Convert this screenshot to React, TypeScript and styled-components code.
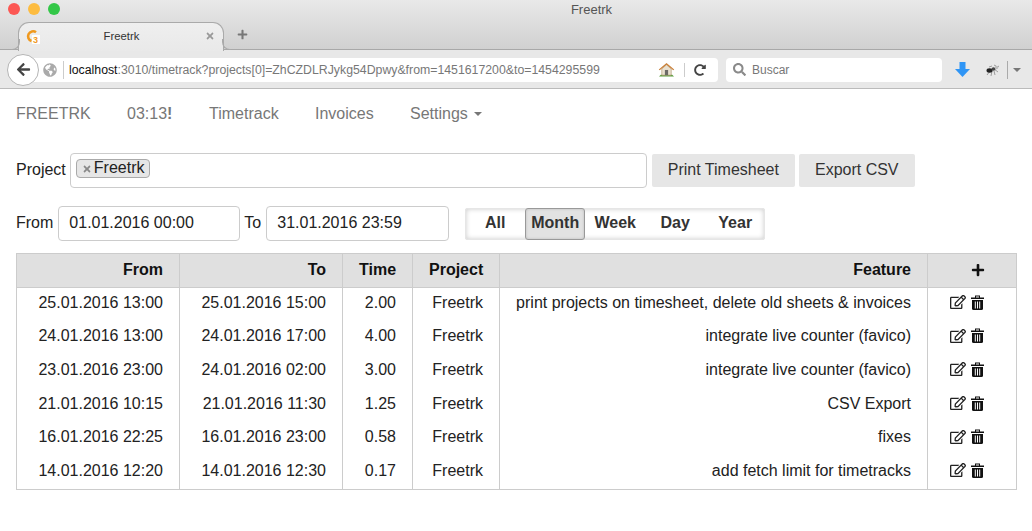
import React from "react";
import styled, { createGlobalStyle } from "styled-components";
import { FaPlus, FaRegEdit, FaTimes, FaArrowLeft, FaRedoAlt, FaSearch, FaGlobeAmericas } from "react-icons/fa";

const Global = createGlobalStyle`
    html, body {
        margin: 0;
        padding: 0;
        background: #fff;
        font-family: "Liberation Sans", Arial, sans-serif;
        font-size: 16px;
        color: #222;
        overflow: hidden;
    }
    * {
        box-sizing: border-box;
    }
`;

const Page = styled.div`
    width: 1032px;
    height: 531px;
    overflow: hidden;
`;

/* browser chrome */

const TitleBar = styled.div`
    height: 50px;
    background: linear-gradient(#e9e9e9, #d0d0d0);
    border-bottom: 1px solid #a8a8a8;
    display: grid;
    grid-template-rows: 21px 29px;
    position: relative;
`;

const TitleRow = styled.div`
    position: relative;
    display: flex;
    align-items: center;
    justify-content: center;
    padding: 0 0 3px 151px;
    font-size: 13px;
    color: #555;
`;

const Lights = styled.div`
    position: absolute;
    left: 8px;
    top: 3px;
    display: flex;
    gap: 8px;
`;

const Light = styled.span<{ $color: string }>`
    width: 12px;
    height: 12px;
    border-radius: 50%;
    background: ${(p) => p.$color};
`;

const TabRow = styled.div`
    display: flex;
    align-items: flex-end;
    padding-left: 18px;
    gap: 13px;
`;

const Tab = styled.div`
    position: relative;
    width: 206px;
    height: 29px;
    margin-bottom: -1px;
    background: linear-gradient(#efefef, #e9e9e9);
    border: 1px solid #aaa;
    border-bottom: none;
    border-radius: 11px 11px 0 0;
    display: flex;
    align-items: center;
    padding: 0 8px 2px 6px;
    font-size: 11.3px;
    color: #333;

    &::before,
    &::after {
        content: "";
        position: absolute;
        bottom: 1px;
        width: 8px;
        height: 10px;
        border-bottom: 1px solid #aaa;
    }
    &::before {
        left: -8px;
        border-right: 1px solid #aaa;
        border-radius: 0 0 8px 0;
    }
    &::after {
        right: -8px;
        border-left: 1px solid #aaa;
        border-radius: 0 0 0 8px;
    }
`;

const TabTitle = styled.span`
    flex: 1;
    text-align: center;
    padding-right: 2px;
`;

const NewTab = styled.span`
    height: 29px;
    display: flex;
    align-items: center;
    padding-bottom: 2px;
    color: #777;
    font-size: 11px;
`;

const Toolbar = styled.div`
    height: 39px;
    background: #e8e8e8;
    border-bottom: 1px solid #bbb;
    display: flex;
    align-items: center;
    padding: 1px 0 0 7px;
`;

const BackButton = styled.div`
    width: 32px;
    height: 32px;
    border-radius: 50%;
    background: #fff;
    border: 1px solid #b5b5b5;
    display: flex;
    align-items: center;
    justify-content: center;
    color: #444;
    font-size: 15px;
    position: relative;
    z-index: 1;
`;

const UrlBar = styled.div`
    width: 685px;
    height: 24px;
    margin-left: -6px;
    background: #fff;
    border-radius: 0 4px 4px 0;
    display: flex;
    align-items: center;
    padding-left: 10px;
    font-size: 12.3px;
    color: #777;
`;

const Globe = styled.span`
    color: #aaa;
    font-size: 14px;
    display: flex;
    margin-right: 6px;
`;

const UrlText = styled.span`
    flex: 1;
    border-left: 1px solid #ccc;
    padding-left: 5px;
    line-height: 18px;
    white-space: nowrap;
    b {
        font-weight: normal;
        color: #111;
    }
`;

const UrlIcons = styled.span`
    display: flex;
    align-items: center;
    gap: 9px;
    padding-right: 12px;
    color: #444;
    font-size: 12px;
`;

const UrlDivider = styled.i`
    width: 1px;
    height: 14px;
    background: #ccc;
`;

const SearchBar = styled.div`
    width: 216px;
    height: 24px;
    margin-left: 8px;
    background: #fff;
    border-radius: 4px;
    display: flex;
    align-items: center;
    gap: 6px;
    padding-left: 7px;
    color: #777;
    font-size: 12px;
    svg {
        color: #8a8a8a;
        font-size: 13px;
    }
`;

const ToolIcons = styled.div`
    display: flex;
    align-items: center;
    margin-left: 13px;
`;

const ToolGap = styled.span`
    width: 15px;
`;

const ToolDivider = styled.i`
    width: 1px;
    height: 18px;
    background: #aaa;
    margin: 0 5px 0 6px;
`;

const Caret = styled.i<{ $color?: string; $size?: number }>`
    display: inline-block;
    border-left: ${(p) => p.$size ?? 4}px solid transparent;
    border-right: ${(p) => p.$size ?? 4}px solid transparent;
    border-top: ${(p) => p.$size ?? 4}px solid ${(p) => p.$color ?? "#777"};
`;

/* app nav */

const Nav = styled.nav`
    height: 50px;
    display: flex;
    align-items: center;
    padding: 0 0 0 16px;
    color: #777;
    font-size: 16px;
`;

const NavItem = styled.span<{ $w: number }>`
    width: ${(p) => p.$w}px;
    display: inline-flex;
    align-items: center;
    gap: 6px;
    white-space: nowrap;
`;

/* filters */

const Content = styled.div`
    padding: 14px 16px 0;
`;

const FilterRow = styled.div`
    display: flex;
    align-items: center;
    height: 35px;
    margin-bottom: 18px;
`;

const Label = styled.label<{ $gap?: number }>`
    margin-right: ${(p) => p.$gap ?? 4}px;
    padding-bottom: 2px;
    color: #222;
`;

const TagInput = styled.div`
    width: 577px;
    height: 35px;
    border: 1px solid #ccc;
    border-radius: 4px;
    padding: 5px 5px;
    margin-right: 5px;
`;

const Tag = styled.span`
    display: inline-flex;
    align-items: center;
    height: 19px;
    padding: 0 5px 2px 5px;
    background: #e6e6e6;
    border: 1px solid #aaa;
    border-radius: 4px;
    gap: 2px;
    svg {
        color: #888;
        font-size: 10px;
        margin-top: 2px;
    }
`;

const Button = styled.button`
    height: 33px;
    padding: 0 16px 2px;
    margin-right: 4px;
    font: inherit;
    color: #333;
    background: #e6e6e6;
    border: none;
    border-radius: 2px;
`;

const DateInput = styled.div<{ $w: number }>`
    width: ${(p) => p.$w}px;
    height: 35px;
    margin-right: 4px;
    border: 1px solid #ccc;
    border-radius: 4px;
    padding: 0 10px 2px;
    display: flex;
    align-items: center;
`;

const RangeGroup = styled.div`
    width: 300px;
    height: 32px;
    margin: 1px 0 0 12px;
    border-radius: 3px;
    background: #fff;
    box-shadow: inset 0 0 0 1px #e6e6e6, inset 0 0 5px 1px #ccc;
    display: flex;
    align-items: center;
`;

const RangeItem = styled.span<{ $active?: boolean }>`
    width: 60px;
    height: 32px;
    padding-bottom: 2px;
    font-weight: bold;
    color: #333;
    display: flex;
    align-items: center;
    justify-content: center;
    border-radius: 3px;
    ${(p) =>
        p.$active &&
        `
        background: #e2e2e2;
        border: 1px solid #999;
        box-shadow: inset 0 0 3px #bbb;
    `}
`;

/* table */

const Table = styled.table`
    width: 1000px;
    border-collapse: collapse;
    table-layout: fixed;
    margin-top: -6px;
`;

const Col = styled.col<{ $w: number }>`
    width: ${(p) => p.$w}px;
`;

const Th = styled.th`
    height: 34px;
    padding: 0 16px 2px;
    text-align: right;
    background: #e0e0e0;
    border: 1px solid #ccc;
    color: #111;
`;

const Td = styled.td`
    height: 33.67px;
    padding: 0 16px 3px;
    text-align: right;
    border-left: 1px solid #ccc;
    border-right: 1px solid #ccc;
    white-space: nowrap;
    color: #222;
    tr:last-child & {
        border-bottom: 1px solid #ccc;
    }
`;

const ActionTh = styled(Th)`
    padding-right: 31px;
`;

const ActionTd = styled(Td)`
    padding-right: 32px;
`;

const IconCell = styled.span`
    display: inline-flex;
    gap: 5px;
    align-items: center;
    color: #222;
    font-size: 16px;
    vertical-align: middle;
    margin-top: -3px;
`;

const PlusIcon = styled(FaPlus)`
    font-size: 14px;
    color: #111;
    vertical-align: middle;
`;

function Favicon() {
    return (
        <svg width="15" height="15" viewBox="0 0 15 15" style={{ flex: "none" }}>
            <path d="M11 3.2A5 5 0 1 0 6.5 12" fill="none" stroke="#f0991f" strokeWidth="2.6" />
            <rect x="7" y="6" width="8" height="9" fill="#fff" />
            <text x="8" y="14" fontSize="9" fontWeight="bold" fontFamily="Liberation Sans" fill="#f0991f">
                3
            </text>
        </svg>
    );
}

function HomeIcon() {
    return (
        <svg width="17" height="15" viewBox="0 0 18 15">
            <path d="M1 15l2-2h12l2 2z" fill="#5a9e3c" />
            <path d="M4 7v6.5h10V7L9 2.5z" fill="#e9e0cf" stroke="#a98a5f" strokeWidth=".6" />
            <path d="M.8 7.6L9 .6l8.2 7-1 .8L9 2.6 1.8 8.4z" fill="#c9803a" />
            <rect x="7.3" y="8" width="3.4" height="5.5" fill="#6d6a66" />
        </svg>
    );
}

function DownloadIcon() {
    return (
        <svg width="15" height="15" viewBox="0 0 15 15">
            <path d="M4.5 0h6v7h4.5l-7.5 8L0 7h4.5z" fill="#2f95f5" />
        </svg>
    );
}

function AntIcon() {
    return (
        <svg width="16" height="14" viewBox="0 0 16 14">
            <g stroke="#888" strokeWidth=".8" fill="none">
                <path d="M2 12L5 8M6 13l1-5M10 12L9 8M13 9L9 6M7 3l-3 1M9 2l2 1M14 3l-3 2" />
            </g>
            <ellipse cx="4.5" cy="7.5" rx="3" ry="2.2" fill="#222" />
            <ellipse cx="8.5" cy="6" rx="2" ry="1.7" fill="#444" />
            <circle cx="11.5" cy="4.5" r="1.8" fill="#bbb" />
        </svg>
    );
}

function TrashIcon() {
    return (
        <svg width="13" height="15" viewBox="0 0 13 15">
            <path d="M0 2.5h13V4H0zM4 2.5V.5h5v2H8V1.5H5v1z" fill="#111" />
            <path d="M1 5h11v8.5a1.5 1.5 0 0 1-1.5 1.5h-8A1.5 1.5 0 0 1 1 13.5z" fill="#111" />
            <path d="M3.8 6.5h1v7h-1zM6 6.5h1v7H6zM8.2 6.5h1v7h-1z" fill="#fff" />
        </svg>
    );
}

const rows = [
    ["25.01.2016 13:00", "25.01.2016 15:00", "2.00", "print projects on timesheet, delete old sheets & invoices"],
    ["24.01.2016 13:00", "24.01.2016 17:00", "4.00", "integrate live counter (favico)"],
    ["23.01.2016 23:00", "24.01.2016 02:00", "3.00", "integrate live counter (favico)"],
    ["21.01.2016 10:15", "21.01.2016 11:30", "1.25", "CSV Export"],
    ["16.01.2016 22:25", "16.01.2016 23:00", "0.58", "fixes"],
    ["14.01.2016 12:20", "14.01.2016 12:30", "0.17", "add fetch limit for timetracks"]
];

export default function App() {
    return (
        <Page>
            <Global />
            <TitleBar>
                <TitleRow>
                    <Lights>
                        <Light $color="#fc5753" />
                        <Light $color="#fdbc40" />
                        <Light $color="#33c748" />
                    </Lights>
                    Freetrk
                </TitleRow>
                <TabRow>
                    <Tab>
                        <Favicon />
                        <TabTitle>Freetrk</TabTitle>
                        <FaTimes color="#999" size={10} />
                    </Tab>
                    <NewTab>
                        <FaPlus />
                    </NewTab>
                </TabRow>
            </TitleBar>
            <Toolbar>
                <BackButton>
                    <FaArrowLeft />
                </BackButton>
                <UrlBar>
                    <Globe>
                        <FaGlobeAmericas />
                    </Globe>
                    <UrlText>
                        <b>localhost</b>:3010/timetrack?projects[0]=ZhCZDLRJykg54Dpwy&amp;from=1451617200&amp;to=1454295599
                    </UrlText>
                    <UrlIcons>
                        <HomeIcon />
                        <UrlDivider />
                        <FaRedoAlt />
                    </UrlIcons>
                </UrlBar>
                <SearchBar>
                    <FaSearch />
                    Buscar
                </SearchBar>
                <ToolIcons>
                    <DownloadIcon />
                    <ToolGap />
                    <AntIcon />
                    <ToolDivider />
                    <Caret $size={4} />
                </ToolIcons>
            </Toolbar>
            <Nav>
                <NavItem $w={111}>FREETRK</NavItem>
                <NavItem $w={82}>
                    <span>
                        03:13<b>!</b>
                    </span>
                </NavItem>
                <NavItem $w={106}>Timetrack</NavItem>
                <NavItem $w={95}>Invoices</NavItem>
                <NavItem $w={90}>
                    Settings <Caret $size={4} />
                </NavItem>
            </Nav>
            <Content>
                <FilterRow>
                    <Label>Project</Label>
                    <TagInput>
                        <Tag>
                            <FaTimes />
                            Freetrk
                        </Tag>
                    </TagInput>
                    <Button>Print Timesheet</Button>
                    <Button>Export CSV</Button>
                </FilterRow>
                <FilterRow>
                    <Label $gap={5}>From</Label>
                    <DateInput $w={182}>01.01.2016 00:00</DateInput>
                    <Label $gap={5}>To</Label>
                    <DateInput $w={183}>31.01.2016 23:59</DateInput>
                    <RangeGroup>
                        <RangeItem>All</RangeItem>
                        <RangeItem $active>Month</RangeItem>
                        <RangeItem>Week</RangeItem>
                        <RangeItem>Day</RangeItem>
                        <RangeItem>Year</RangeItem>
                    </RangeGroup>
                </FilterRow>
                <Table>
                    <colgroup>
                        <Col $w={163} />
                        <Col $w={163} />
                        <Col $w={70} />
                        <Col $w={87} />
                        <Col $w={428} />
                        <Col $w={89} />
                    </colgroup>
                    <thead>
                        <tr>
                            <Th>From</Th>
                            <Th>To</Th>
                            <Th>Time</Th>
                            <Th>Project</Th>
                            <Th>Feature</Th>
                            <ActionTh>
                                <PlusIcon />
                            </ActionTh>
                        </tr>
                    </thead>
                    <tbody>
                        {rows.map((r) => (
                            <tr key={r[0]}>
                                <Td>{r[0]}</Td>
                                <Td>{r[1]}</Td>
                                <Td>{r[2]}</Td>
                                <Td>Freetrk</Td>
                                <Td>{r[3]}</Td>
                                <ActionTd>
                                    <IconCell>
                                        <FaRegEdit />
                                        <TrashIcon />
                                    </IconCell>
                                </ActionTd>
                            </tr>
                        ))}
                    </tbody>
                </Table>
            </Content>
        </Page>
    );
}
